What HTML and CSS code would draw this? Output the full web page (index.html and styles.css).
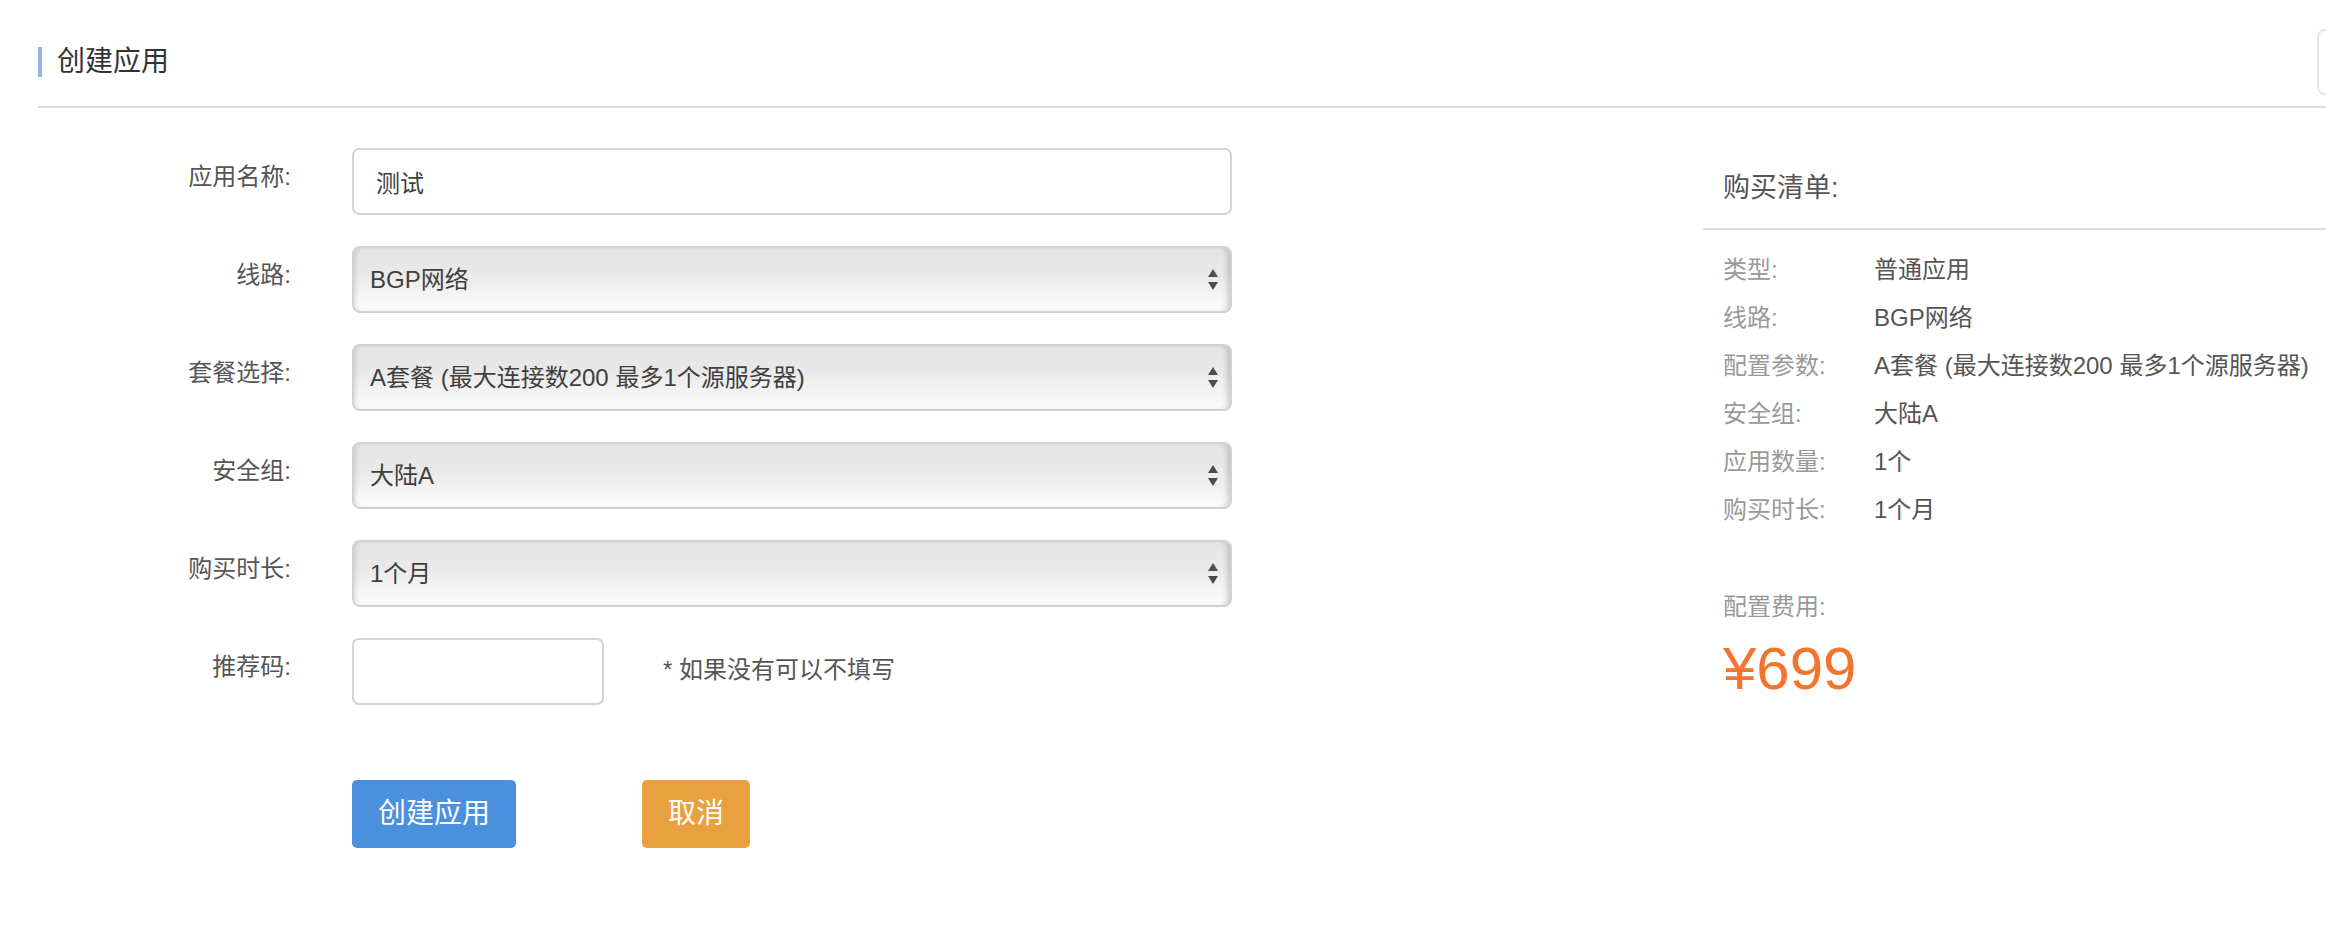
FILE: index.html
```html
<!DOCTYPE html>
<html lang="zh-CN">
<head>
<meta charset="utf-8">
<title>创建应用</title>
<link rel="stylesheet" href="styles.css">
</head>
<body>
<div class="page">
  <header class="page-header">
    <h1 class="page-title">创建应用</h1>
    <div class="header-box"></div>
  </header>

  <main class="main">
    <form class="create-form">
      <div class="form-row">
        <label class="form-label">应用名称:</label>
        <div class="form-field">
          <input class="text-input wide" type="text" value="测试">
        </div>
      </div>
      <div class="form-row">
        <label class="form-label">线路:</label>
        <div class="form-field select-wrap">
          <select class="select-input"><option>BGP网络</option></select>
          <svg class="select-arrows" width="10" height="22" viewBox="0 0 10 22"><path d="M5 0 L10 8 L0 8 Z M0 13 L10 13 L5 21 Z" fill="#4d4d4d"/></svg>
        </div>
      </div>
      <div class="form-row">
        <label class="form-label">套餐选择:</label>
        <div class="form-field select-wrap">
          <select class="select-input"><option>A套餐 (最大连接数200 最多1个源服务器)</option></select>
          <svg class="select-arrows" width="10" height="22" viewBox="0 0 10 22"><path d="M5 0 L10 8 L0 8 Z M0 13 L10 13 L5 21 Z" fill="#4d4d4d"/></svg>
        </div>
      </div>
      <div class="form-row">
        <label class="form-label">安全组:</label>
        <div class="form-field select-wrap">
          <select class="select-input"><option>大陆A</option></select>
          <svg class="select-arrows" width="10" height="22" viewBox="0 0 10 22"><path d="M5 0 L10 8 L0 8 Z M0 13 L10 13 L5 21 Z" fill="#4d4d4d"/></svg>
        </div>
      </div>
      <div class="form-row">
        <label class="form-label">购买时长:</label>
        <div class="form-field select-wrap">
          <select class="select-input"><option>1个月</option></select>
          <svg class="select-arrows" width="10" height="22" viewBox="0 0 10 22"><path d="M5 0 L10 8 L0 8 Z M0 13 L10 13 L5 21 Z" fill="#4d4d4d"/></svg>
        </div>
      </div>
      <div class="form-row">
        <label class="form-label">推荐码:</label>
        <div class="form-field inline-field">
          <input class="text-input short" type="text" value="">
          <span class="hint">* 如果没有可以不填写</span>
        </div>
      </div>
      <div class="form-actions">
        <button type="button" class="btn btn-primary">创建应用</button>
        <button type="button" class="btn btn-warning">取消</button>
      </div>
    </form>

    <aside class="order-panel">
      <div class="order-title">购买清单:</div>
      <dl class="order-list">
        <div class="order-item"><dt>类型:</dt><dd>普通应用</dd></div>
        <div class="order-item"><dt>线路:</dt><dd>BGP网络</dd></div>
        <div class="order-item"><dt>配置参数:</dt><dd>A套餐 (最大连接数200 最多1个源服务器)</dd></div>
        <div class="order-item"><dt>安全组:</dt><dd>大陆A</dd></div>
        <div class="order-item"><dt>应用数量:</dt><dd>1个</dd></div>
        <div class="order-item"><dt>购买时长:</dt><dd>1个月</dd></div>
      </dl>
      <div class="fee-label">配置费用:</div>
      <div class="fee-price">¥699</div>
    </aside>
  </main>
</div>
</body>
</html>
```

FILE: styles.css
```css
html, body {
  margin: 0;
  padding: 0;
  background: #fff;
  overflow: hidden;
}

body {
  font-family: "Liberation Sans", "Noto Sans CJK SC", sans-serif;
  color: #555;
}

.page {
  width: 2326px;
}

.page-header {
  display: flex;
  align-items: center;
  margin-left: 38px;
  padding-top: 29px;
  padding-bottom: 11px;
  border-bottom: 2px solid #dcdcdc;
}

.page-title {
  margin: 0;
  font-size: 28px;
  font-weight: normal;
  line-height: 30px;
  color: #333;
  border-left: 4px solid #93b6e1;
  padding-left: 15px;
}

.header-box {
  margin-left: auto;
  margin-right: -111px;
  width: 116px;
  height: 62px;
  border: 2px solid #e1e6ec;
  border-radius: 8px;
}

.main {
  display: flex;
  align-items: flex-start;
}

.create-form {
  width: 1232px;
  flex: none;
  padding-top: 40px;
  display: flex;
  flex-direction: column;
  gap: 31px;
}

.form-row {
  display: flex;
  align-items: flex-start;
  gap: 61px;
}

.form-label {
  width: 291px;
  flex: none;
  text-align: right;
  font-size: 24px;
  line-height: 58px;
  color: #555;
}

.form-field {
  flex: 1;
  height: 67px;
}

.select-wrap {
  position: relative;
}

.inline-field {
  display: flex;
  align-items: center;
  gap: 59px;
}

.text-input {
  box-sizing: border-box;
  height: 67px;
  border: 2px solid #d1d4d8;
  border-radius: 7px;
  background: #fff;
  padding: 0 22px;
  font-family: "Liberation Sans", "Noto Sans CJK SC", sans-serif;
  font-size: 24px;
  color: #3f3f3f;
  outline: none;
}

.text-input.wide {
  width: 100%;
}

.text-input.short {
  width: 252px;
  flex: none;
}

.select-input {
  -webkit-appearance: none;
  appearance: none;
  box-sizing: border-box;
  width: 100%;
  height: 67px;
  border: 2px solid #cfd2d6;
  border-radius: 8px;
  padding: 0 40px 0 16px;
  font-family: "Liberation Sans", "Noto Sans CJK SC", sans-serif;
  font-size: 24px;
  color: #3f3f3f;
  background: linear-gradient(to bottom, #e4e4e4 0%, #e9e9e9 40%, #f6f6f6 80%, #fbfbfb 100%);
  box-shadow: inset 4px 0 4px -2px rgba(0, 0, 0, 0.10), inset -6px 0 5px -3px rgba(0, 0, 0, 0.16);
  outline: none;
}

.select-arrows {
  position: absolute;
  right: 14px;
  top: 23px;
  pointer-events: none;
}

.hint {
  font-size: 24px;
  color: #555;
  margin-bottom: 8px;
}

.form-actions {
  display: flex;
  gap: 126px;
  margin-top: 44px;
  padding-left: 352px;
}

.btn {
  height: 68px;
  border: none;
  border-radius: 5px;
  color: #fff;
  font-family: "Liberation Sans", "Noto Sans CJK SC", sans-serif;
  font-size: 28px;
  line-height: 68px;
  padding: 0;
}

.btn-primary {
  width: 164px;
  background: #4a90de;
}

.btn-warning {
  width: 108px;
  background: #e9a03f;
}

.order-panel {
  flex: 1;
  margin-left: 471px;
}

.order-title {
  padding: 60px 0 20px 20px;
  font-size: 27px;
  line-height: 40px;
  color: #555;
  border-bottom: 2px solid #dedede;
}

.order-list {
  margin: 0;
  padding: 16px 0 0 20px;
}

.order-item {
  display: flex;
  font-size: 24px;
  line-height: 48px;
}

.order-item dt {
  width: 151px;
  flex: none;
  color: #999;
}

.order-item dd {
  margin: 0;
  color: #555;
}

.fee-label {
  padding-left: 20px;
  margin-top: 58px;
  font-size: 24px;
  line-height: 30px;
  color: #999;
}

.fee-price {
  padding-left: 20px;
  margin-top: 12px;
  font-size: 60px;
  line-height: 70px;
  color: #f2742f;
}
```
